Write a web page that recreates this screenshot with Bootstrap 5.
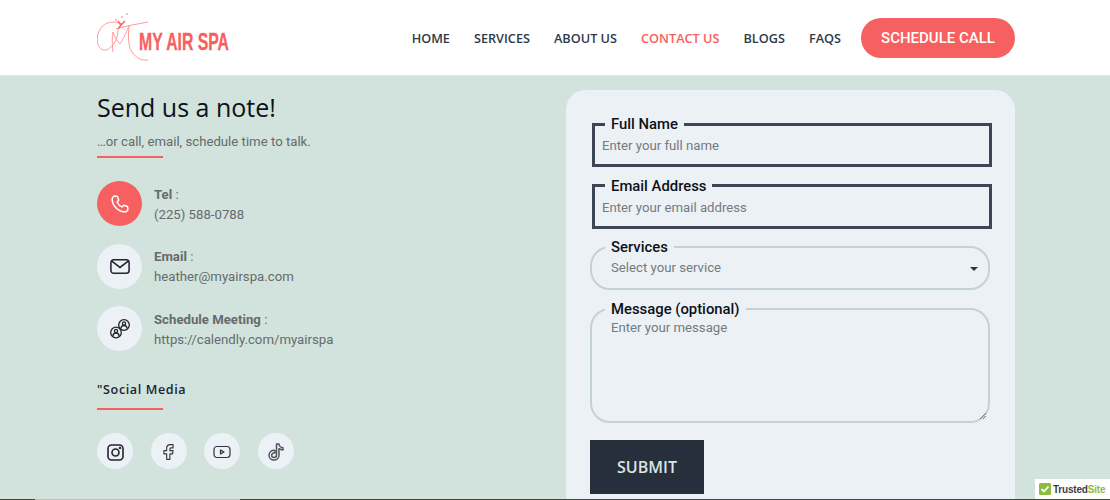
<!DOCTYPE html>
<html lang="en"><head><meta charset="utf-8"><title>Contact</title>
<link rel="stylesheet" href="https://cdn.jsdelivr.net/npm/bootstrap@5.3.0/dist/css/bootstrap.min.css">
<style>
html,body{height:500px;overflow:hidden}
body{font-family:Roboto,sans-serif;color:#666a6d;background:#d1e3dc}
.page-wrap{width:918px;margin-left:97px}
.site-head{height:76px;background:#fff;border-bottom:1px solid #dfe8e4}
.site-head .page-wrap{height:75px}
.logo-art{flex:none}
.logo-word{font-family:"Liberation Sans",sans-serif;font-weight:700;font-size:23px;fill:#f76060;stroke:#f76060;stroke-width:.3px}
.menu-link{font-family:"Open Sans",sans-serif;font-weight:600;font-size:12.7px;color:#2f3a4a;text-decoration:none;margin-right:24px;margin-top:2px}
.menu-link.on{color:#f76060}
.call-btn{background:#f76060;color:#fff;font-family:Roboto,sans-serif;font-weight:500;font-size:15px;border-radius:20px;width:154px;height:40px;padding:0;border:0;line-height:40px;margin-left:-4px}
.call-btn:hover{background:#f76060;color:#fff}
.main-area{height:423px;overflow:hidden}
.left-side{width:469px;padding-top:17px}
.note-title{font-family:"Open Sans",sans-serif;font-weight:400;font-size:25px;line-height:28px;color:#0d1117;margin:0}
.note-sub{font-size:13.2px;line-height:20px;margin:11px 0 0}
.red-rule{width:66px;height:2px;background:#f76060;margin-top:4px}
.info-row{height:45px;margin-bottom:17.5px}
.info-list{margin-top:23px}
.circle{width:45px;height:45px;border-radius:50%;background:#ecf1f6;flex:none;margin-right:12px}
.circle.hot{background:#f76060}
.info-text{font-size:13.2px;line-height:20px;padding-top:3.5px}
.info-text b{font-weight:700}
.social-title{font-family:"Open Sans",sans-serif;font-weight:600;font-size:12.6px;letter-spacing:.6px;color:#1c2533;line-height:18px;margin:30px 0 0}
.social-rule{margin-top:9px}
.social-list{margin-top:23px;gap:17.5px}
.social-dot{width:36px;height:36px;border-radius:50%;background:#ecf1f6;flex:none;padding-top:2px}
.form-panel{width:449px;margin-top:14px;background:#ecf1f6;border-radius:20px 20px 0 0;padding:25px 24px 0;height:500px}
.field-box{border:3px solid #3c4656;margin:0 0 9.5px 2px;width:400px;padding:0 7px;height:52px;position:relative}
.field-box legend{float:none;width:auto;font-size:14.85px;font-weight:500;color:#0d1117;line-height:18px;margin:0 0 -2px 3px;padding:0 6px}
.field-text{font-size:13.2px;line-height:20px;color:#757a80}
.field-box .field-text{margin-top:5px}
.pick-text{margin-top:2px}
.soft-box{border:2px solid #c3d1d8;border-radius:20px;margin:0 0 9.5px 0;width:400px;padding:0 19px;height:52px;position:relative}
.soft-box legend{float:none;width:auto;font-size:14.85px;font-weight:500;color:#0d1117;line-height:18px;margin:0 0 0 -6px;padding:0 6px}
.caret-mark{position:absolute;right:10px;top:11px;width:0;height:0;border-left:4px solid transparent;border-right:4px solid transparent;border-top:4px solid #2a3442}
.msg-box{height:123px;margin-bottom:17.5px}
.grip{position:absolute;right:1px;bottom:1px}
.send-btn{background:#272f3c;color:#d9e6e2;font-family:"Open Sans",sans-serif;font-weight:600;font-size:16px;width:114px;height:54px;border-radius:0;padding:0;border:0}
.send-btn:hover{background:#272f3c;color:#d9e6e2}
.trust-tag{position:absolute;right:0;top:479px;width:75px;height:20px;background:#fff;font-family:"Liberation Sans",sans-serif;font-weight:700;font-size:10px;color:#3a3f42;letter-spacing:-.2px;padding-left:4px;gap:2px}
.trust-tag i{font-style:normal;color:#8dbb3c}
.edge-strip{height:1px}
.edge-a{width:35px;background:#3d4a42}
.edge-b{width:205px;background:#b6c3bd}
.edge-c{background:#3d4a42}
</style></head><body>
<header class="site-head">
 <div class="page-wrap d-flex align-items-center">
  <svg class="logo-art" width="180" height="55" viewBox="97 10 180 55" fill="none">
   <g stroke="#f99" stroke-width="1">
    <path d="M122 24C110 19 100 24 97.500 36 96 46 101 51 106 50 112 48 118 40 118 30"/>
    <path d="M148 22C138 24 125 26 116 29"/>
    <path d="M113 52C112 44 112 36 113 32 115 38 118 42 120 44 124 38 127 30 129 26 128 36 128 46 132 52 136 58 142 61 148 60"/>
    <path d="M118 21l3 4 4-4M121 25l-3 4" stroke="#f66" stroke-width="1.500"/>
   </g>
   <circle cx="127" cy="14" r=".8" fill="#f66"/><circle cx="116" cy="20" r=".8" fill="#f66"/><circle cx="122" cy="17" r=".8" fill="#f66"/>
   <text class="logo-word" x="139" y="50" textLength="90" lengthAdjust="spacingAndGlyphs">MY AIR SPA</text>
  </svg>
  <nav class="ms-auto d-flex align-items-center">
   <a class="menu-link" href="#">HOME</a><a class="menu-link" href="#">SERVICES</a><a class="menu-link" href="#">ABOUT US</a><a class="menu-link on" href="#">CONTACT US</a><a class="menu-link" href="#">BLOGS</a><a class="menu-link" href="#">FAQS</a>
   <a class="btn call-btn" href="#">SCHEDULE CALL</a>
  </nav>
 </div>
</header>
<main class="main-area">
 <div class="page-wrap d-flex">
  <section class="left-side">
   <h1 class="note-title">Send us a note!</h1>
   <p class="note-sub">…or call, email, schedule time to talk.</p>
   <div class="red-rule"></div>
   <div class="info-list">
    <div class="info-row d-flex">
     <div class="circle hot d-flex align-items-center justify-content-center">
      <svg width="20" height="20" viewBox="0 0 24 24" fill="none" stroke="#fff" stroke-width="1.800" stroke-linejoin="round"><path d="M6 2.500 9 3l1.500 4.500-2 2c1 2.500 3.500 5 6 6l2-2L21 15l.5 3c0 2-2 3.500-4 3.500C9 21 3 14 2.500 6.500 2.500 4.500 4 2.500 6 2.500Z"/></svg>
     </div>
     <div class="info-text"><b>Tel</b> :<br>(225) 588-0788</div>
    </div>
    <div class="info-row d-flex">
     <div class="circle d-flex align-items-center justify-content-center">
      <svg width="20" height="17" viewBox="0 0 22 18" fill="none" stroke="#20262e" stroke-width="1.700"><rect x="1" y="1.500" width="20" height="15" rx="3"/><path d="M2 3l9 7 9-7"/></svg>
     </div>
     <div class="info-text"><b>Email</b> :<br>heather@myairspa.com</div>
    </div>
    <div class="info-row d-flex">
     <div class="circle d-flex align-items-center justify-content-center">
      <svg width="20" height="20" viewBox="0 0 20 20" fill="none" stroke="#20262e" stroke-width="1.300"><circle cx="6" cy="13.500" r="5.300"/><circle cx="14" cy="6" r="5.300"/><circle cx="6" cy="12" r="1.600"/><circle cx="14" cy="4.500" r="1.600"/><path d="M3 17c0-2 1.500-3 3-3s3 1 3 3M11 9.500c0-2 1.500-3 3-3s3 1 3 3"/></svg>
     </div>
     <div class="info-text"><b>Schedule Meeting</b> :<br>https://calendly.com/myairspa</div>
    </div>
   </div>
   <h2 class="social-title">"Social Media</h2>
   <div class="red-rule social-rule"></div>
   <div class="social-list d-flex">
    <div class="social-dot d-flex align-items-center justify-content-center">
     <svg width="17" height="17" viewBox="0 0 17 17" fill="none" stroke="#20262e" stroke-width="1.600"><rect x="1" y="1" width="15" height="15" rx="3.500"/><circle cx="8.500" cy="8.500" r="3.500"/><circle cx="13" cy="4" r=".5"/></svg>
    </div>
    <div class="social-dot d-flex align-items-center justify-content-center">
     <svg width="11" height="18" viewBox="0 0 12 18" fill="none" stroke="#30363e" stroke-width="1.200" stroke-linejoin="round"><path d="M4 17V11H1V7.500h3V5c0-2.500 1.500-4 4-4h3v3.500H9C8 4.500 7.500 5 7.500 6v1.500H11l-.5 3.500h-3v6Z"/></svg>
    </div>
    <div class="social-dot d-flex align-items-center justify-content-center">
     <svg width="18" height="14" viewBox="0 0 18 14" fill="none" stroke="#30363e" stroke-width="1.200" stroke-linejoin="round"><rect x="1" y="1.500" width="16" height="11" rx="3"/><path d="M7.500 5v4l3.500-2Z"/></svg>
    </div>
    <div class="social-dot d-flex align-items-center justify-content-center">
     <svg width="16" height="18" viewBox="0 0 16 18" fill="none" stroke="#50565e" stroke-width="1.500" stroke-linejoin="round"><path d="M8.500 1H11c.2 2 1.500 3.500 4 3.700V7c-1.500 0-3-.5-4-1.300V12c0 3-2.200 5-5 5s-5-2-5-4.800c0-3 2.500-5.200 5.800-4.800v2.500C5.200 9.600 3.700 10.700 3.700 12.200c0 1.300 1 2.300 2.300 2.300s2.500-1 2.500-2.500Z"/></svg>
    </div>
   </div>
  </section>
  <section class="form-panel">
   <fieldset class="field-box"><legend>Full Name</legend><div class="field-text">Enter your full name</div></fieldset>
   <fieldset class="field-box"><legend>Email Address</legend><div class="field-text">Enter your email address</div></fieldset>
   <fieldset class="soft-box"><legend>Services</legend><div class="field-text pick-text">Select your service</div><span class="caret-mark"></span></fieldset>
   <fieldset class="soft-box msg-box"><legend>Message (optional)</legend><div class="field-text">Enter your message</div>
    <svg class="grip" width="8" height="8" viewBox="0 0 8 8" stroke="#777" stroke-width="1"><path d="M1 7l6-6M4 7l3-3"/></svg></fieldset>
   <button class="btn send-btn" type="button">SUBMIT</button>
  </section>
 </div>
</main>
<div class="trust-tag d-flex align-items-center">
 <svg width="12" height="12" viewBox="0 0 12 12" class="flex-none"><rect width="12" height="12" rx="1.500" fill="#8dbb3c"/><path d="M2.500 6l2.500 2.500 4.500-5" fill="none" stroke="#fff" stroke-width="1.800"/></svg>
 <span>Trusted<i>Site</i></span>
</div>
<div class="edge-strip d-flex"><div class="edge-a"></div><div class="edge-b"></div><div class="edge-c flex-fill"></div></div>
</body></html>
